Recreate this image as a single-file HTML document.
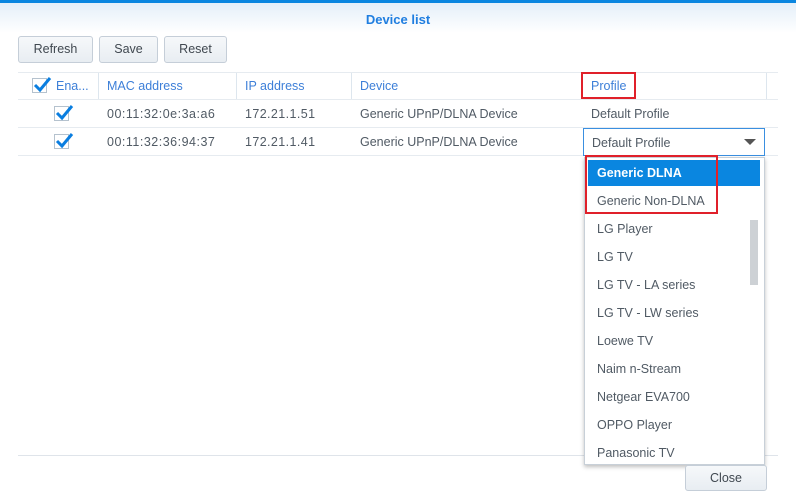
<!DOCTYPE html>
<html><head><style>
*{margin:0;padding:0;box-sizing:border-box}
body{width:796px;height:496px;background:#fff;font-family:"Liberation Sans",sans-serif;font-size:12.5px;color:#505a64;position:relative;overflow:hidden}
.a{position:absolute}
.btn{position:absolute;top:36px;height:27px;border:1px solid #c5ced8;border-radius:3px;background:linear-gradient(#f6f8fa,#e8edf2);text-align:center;line-height:25px;color:#404850;font-size:12.5px}
.hd{color:#3d7fd8;top:79px}
.vl{position:absolute;top:73px;height:26px;width:1px;background:#dde6ee}
.hl{position:absolute;height:1px;background:#e6ebf0}
.cb{position:absolute;width:15px;height:15px;border:1px solid #b5c2ce;background:#fff}
.item{position:absolute;left:597px;font-size:12.5px;color:#505a64}
</style></head><body>
<div class="a" style="left:0;top:0;width:796px;height:3px;background:#0a86e0"></div>
<div class="a" style="left:0;top:3px;width:796px;height:30px;background:linear-gradient(#e4eff9,#fff)"></div>
<div class="a" style="left:0;top:12px;width:796px;text-align:center;color:#1f7ee0;font-weight:bold;font-size:13px">Device list</div>
<div class="btn" style="left:18px;width:75px">Refresh</div>
<div class="btn" style="left:99px;width:59px">Save</div>
<div class="btn" style="left:164px;width:63px">Reset</div>
<div class="hl" style="left:18px;width:760px;top:72px"></div>
<div class="hl" style="left:18px;width:760px;top:99px"></div>
<div class="hl" style="left:18px;width:760px;top:127px"></div>
<div class="hl" style="left:18px;width:760px;top:155px"></div>
<div class="vl" style="left:98px"></div><div class="vl" style="left:236px"></div><div class="vl" style="left:351px"></div><div class="vl" style="left:766px"></div>
<div class="cb" style="left:32px;top:78px"></div>
<div class="cb" style="left:54px;top:106px"></div>
<div class="cb" style="left:54px;top:134px"></div>
<svg class="a" style="left:32px;top:74px" width="20" height="20"><path d="M3 11 L8 16 L18 4" stroke="#0a7ee0" stroke-width="3" fill="none"/></svg>
<svg class="a" style="left:54px;top:102px" width="20" height="20"><path d="M3 11 L8 16 L18 4" stroke="#0a7ee0" stroke-width="3" fill="none"/></svg>
<svg class="a" style="left:54px;top:130px" width="20" height="20"><path d="M3 11 L8 16 L18 4" stroke="#0a7ee0" stroke-width="3" fill="none"/></svg>
<div class="a hd" style="left:56px">Ena...</div>
<div class="a hd" style="left:107px">MAC address</div>
<div class="a hd" style="left:245px">IP address</div>
<div class="a hd" style="left:360px">Device</div>
<div class="a hd" style="left:591px">Profile</div>
<div class="a" style="left:581px;top:72px;width:55px;height:27px;border:2px solid #e0202a"></div>
<div class="a" style="left:107px;top:107px;letter-spacing:.5px">00:11:32:0e:3a:a6</div>
<div class="a" style="left:245px;top:107px;letter-spacing:.4px">172.21.1.51</div>
<div class="a" style="left:360px;top:107px">Generic UPnP/DLNA Device</div>
<div class="a" style="left:591px;top:107px">Default Profile</div>
<div class="a" style="left:107px;top:135px;letter-spacing:.5px">00:11:32:36:94:37</div>
<div class="a" style="left:245px;top:135px;letter-spacing:.4px">172.21.1.41</div>
<div class="a" style="left:360px;top:135px">Generic UPnP/DLNA Device</div>
<div class="a" style="left:583px;top:128px;width:182px;height:28px;border:1px solid #3a8fe0;background:#fff"></div>
<div class="a" style="left:592px;top:136px">Default Profile</div>
<svg class="a" style="left:744px;top:138px" width="12" height="8"><path d="M0 1 L12 1 L6 7Z" fill="#555"/></svg>
<div class="hl" style="left:18px;width:760px;top:455px;background:#dfe4ea"></div>
<div class="a" style="left:584px;top:157px;width:181px;height:308px;background:#fff;border:1px solid #c8d0d8;box-shadow:0 2px 4px rgba(0,0,0,.25)"></div>
<div class="a" style="left:588px;top:160px;width:172px;height:26px;background:#0a86e0"></div>
<div class="a" style="left:750px;top:220px;width:8px;height:65px;background:#cdd1d5"></div>
<div class="item" style="top:166px;color:#fff;font-weight:bold">Generic DLNA</div>
<div class="item" style="top:194px">Generic Non-DLNA</div>
<div class="item" style="top:222px">LG Player</div>
<div class="item" style="top:250px">LG TV</div>
<div class="item" style="top:278px">LG TV - LA series</div>
<div class="item" style="top:306px">LG TV - LW series</div>
<div class="item" style="top:334px">Loewe TV</div>
<div class="item" style="top:362px">Naim n-Stream</div>
<div class="item" style="top:390px">Netgear EVA700</div>
<div class="item" style="top:418px">OPPO Player</div>
<div class="item" style="top:446px">Panasonic TV</div>
<div class="a" style="left:585px;top:155px;width:133px;height:59px;border:2px solid #e0202a"></div>
<div class="btn" style="left:685px;top:465px;width:82px;height:26px;line-height:24px">Close</div>
</body></html>
